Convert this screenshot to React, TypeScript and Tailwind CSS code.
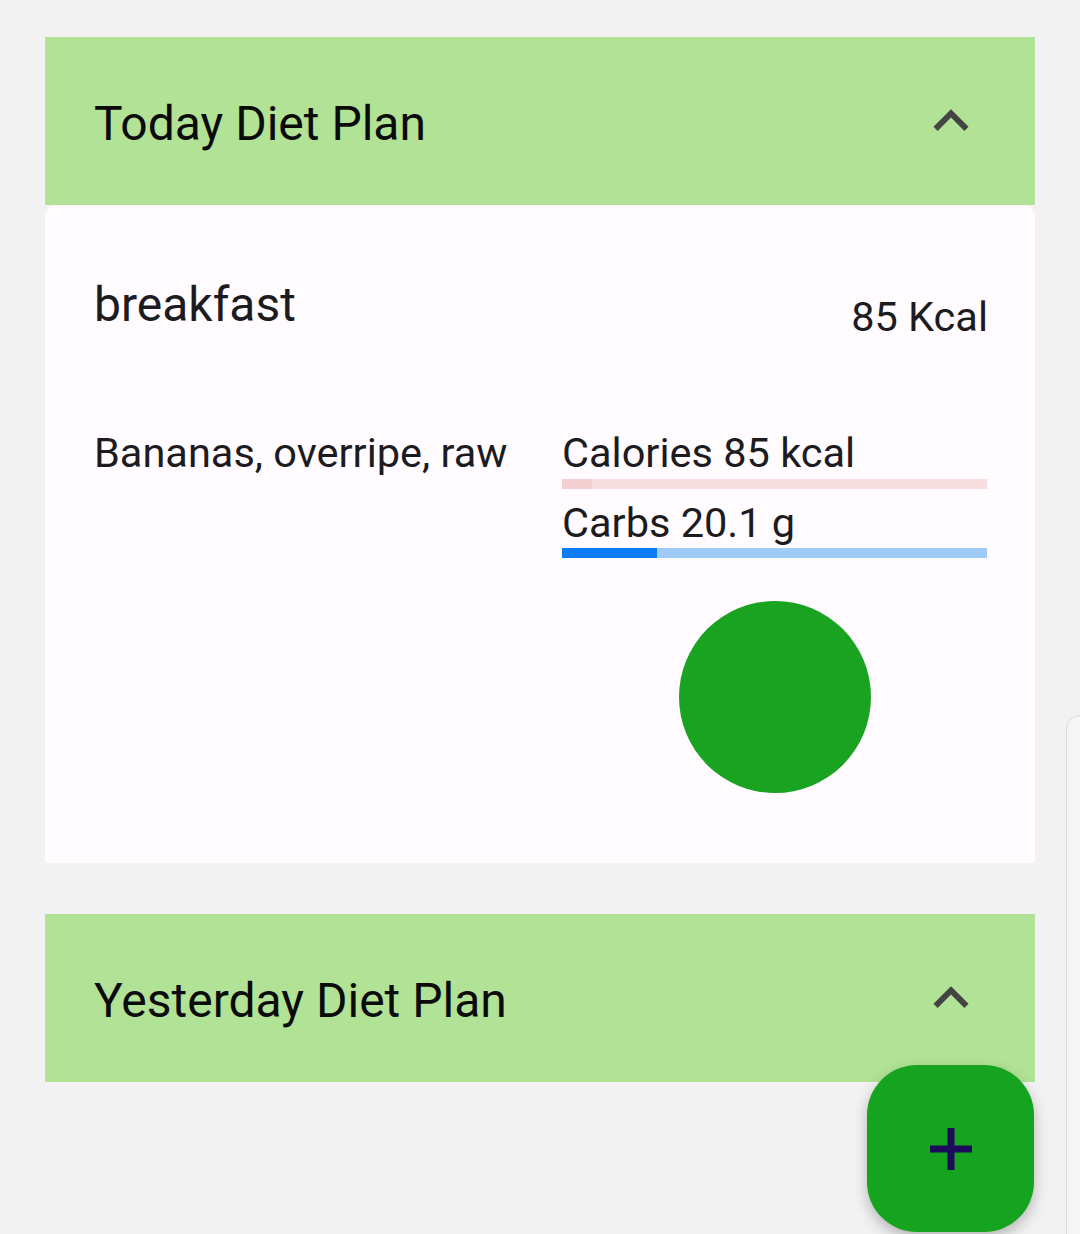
import React from "react";

function ExpandLess() {
  return (
    <svg width={70} height={70} viewBox="0 0 24 24" fill="#444444">
      <path d="M12 8l-6 6 1.41 1.41L12 10.83l4.59 4.58L18 14z" />
    </svg>
  );
}

function SectionHeader({ title }: { title: string }) {
  return (
    <div className="h-[168px] bg-[#b2e295] flex items-center justify-between pl-[49px] pr-[49px] pt-[5px]">
      <span className="text-[48px] leading-[48px] text-[#0b0b0b]">{title}</span>
      <div className="-mt-[5px]">
        <ExpandLess />
      </div>
    </div>
  );
}

function Bar({ value, track, fill }: { value: number; track: string; fill: string }) {
  return (
    <div className={`h-[10px] w-full ${track}`}>
      <div className={`h-full ${fill}`} style={{ width: `${value}%` }} />
    </div>
  );
}

export default function App() {
  return (
    <div
      className="relative w-[1080px] h-[1234px] overflow-hidden bg-[#f2f2f2] pt-[37px] px-[45px]"
      style={{ fontFamily: "Roboto, 'Noto Sans', sans-serif" }}
    >
      <SectionHeader title="Today Diet Plan" />

      {/* meal card */}
      <div className="h-[658px] bg-[#fffbfe] rounded-t-[12px] pl-[49px] pr-[47px] pt-[76px] text-[#1c1b1f]">
        <div className="flex justify-between items-start">
          <span className="text-[48px] leading-[47px]">breakfast</span>
          <span className="text-[41.5px] leading-[42px] mt-[15px]">85 Kcal</span>
        </div>

        <div className="flex mt-[94px]">
          <div className="w-[468px] text-[41.5px] leading-[42px]">Bananas, overripe, raw</div>
          <div className="w-[425px] flex flex-col">
            <span className="text-[41.5px] leading-[42px]">Calories 85 kcal</span>
            <div className="mt-[5px]">
              <Bar value={7} track="bg-[#f7dfe0]" fill="bg-[#f2cfd0]" />
            </div>
            <span className="text-[41.5px] leading-[42px] mt-[13px]">Carbs 20.1 g</span>
            <div className="mt-[4px]">
              <Bar value={22.4} track="bg-[#9fcbf9]" fill="bg-[#0a7cf5]" />
            </div>
            <div className="mt-[43px] mx-auto w-[192px] h-[192px] rounded-full bg-[#19a320]" />
          </div>
        </div>
      </div>

      <div className="mt-[51px]">
        <SectionHeader title="Yesterday Diet Plan" />
      </div>

      {/* sheet peeking at right edge */}
      <div className="absolute left-[1066px] top-[715px] w-[40px] h-[600px] rounded-tl-[14px] border border-[#d9d9d9] bg-[#f6f6f6]" />

      {/* FAB */}
      <button className="absolute left-[867px] top-[1065px] w-[167px] h-[167px] rounded-[50px] bg-[#16a31f] shadow-[0_6px_14px_rgba(0,0,0,0.25)] flex items-center justify-center">
        <svg width={42} height={42} viewBox="0 0 42 42">
          <rect x={17.5} y={0} width={7} height={42} fill="#1e0a5c" />
          <rect x={0} y={17.5} width={42} height={7} fill="#1e0a5c" />
        </svg>
      </button>
    </div>
  );
}
